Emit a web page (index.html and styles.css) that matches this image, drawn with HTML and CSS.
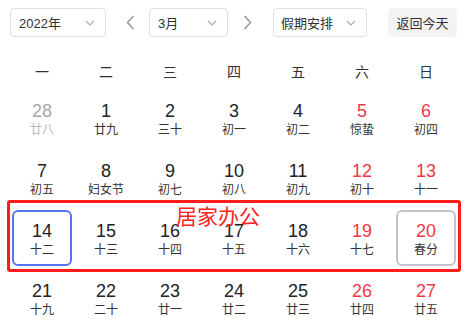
FILE: index.html
```html
<!DOCTYPE html>
<html lang="zh-CN">
<head>
  <meta charset="UTF-8">
  <meta name="viewport" content="width=device-width, initial-scale=1.0">
  <title>日历</title>
  <link rel="stylesheet" href="styles.css">
</head>
<body>
  <div class="calendar">
    <div class="toolbar">
      <div class="select year">
        <span>2022年</span>
        <svg class="caret" width="10" height="6" viewBox="0 0 10 6"><path d="M1 1 L5 5 L9 1" /></svg>
      </div>
      <button class="nav prev">
        <svg width="9" height="15" viewBox="0 0 9 15"><path d="M7.5 1 L1.5 7.5 L7.5 14" /></svg>
      </button>
      <div class="select month">
        <span>3月</span>
        <svg class="caret" width="10" height="6" viewBox="0 0 10 6"><path d="M1 1 L5 5 L9 1" /></svg>
      </div>
      <button class="nav next">
        <svg width="9" height="15" viewBox="0 0 9 15"><path d="M1.5 1 L7.5 7.5 L1.5 14" /></svg>
      </button>
      <div class="select holiday">
        <span>假期安排</span>
        <svg class="caret" width="10" height="6" viewBox="0 0 10 6"><path d="M1 1 L5 5 L9 1" /></svg>
      </div>
      <button class="today-btn">返回今天</button>
    </div>

    <div class="weekdays">
      <span>一</span><span>二</span><span>三</span><span>四</span><span>五</span><span>六</span><span>日</span>
    </div>

    <div class="days">
      <div class="day other"><b>28</b><small>廿八</small></div>
      <div class="day"><b>1</b><small>廿九</small></div>
      <div class="day"><b>2</b><small>三十</small></div>
      <div class="day"><b>3</b><small>初一</small></div>
      <div class="day"><b>4</b><small>初二</small></div>
      <div class="day weekend"><b>5</b><small>惊蛰</small></div>
      <div class="day weekend"><b>6</b><small>初四</small></div>

      <div class="day"><b>7</b><small>初五</small></div>
      <div class="day"><b>8</b><small>妇女节</small></div>
      <div class="day"><b>9</b><small>初七</small></div>
      <div class="day"><b>10</b><small>初八</small></div>
      <div class="day"><b>11</b><small>初九</small></div>
      <div class="day weekend"><b>12</b><small>初十</small></div>
      <div class="day weekend"><b>13</b><small>十一</small></div>

      <div class="day selected"><b>14</b><small>十二</small></div>
      <div class="day"><b>15</b><small>十三</small></div>
      <div class="day"><b>16</b><small>十四</small></div>
      <div class="day"><b>17</b><small>十五</small></div>
      <div class="day"><b>18</b><small>十六</small></div>
      <div class="day weekend"><b>19</b><small>十七</small></div>
      <div class="day weekend today"><b>20</b><small>春分</small></div>

      <div class="day"><b>21</b><small>十九</small></div>
      <div class="day"><b>22</b><small>二十</small></div>
      <div class="day"><b>23</b><small>廿一</small></div>
      <div class="day"><b>24</b><small>廿二</small></div>
      <div class="day"><b>25</b><small>廿三</small></div>
      <div class="day weekend"><b>26</b><small>廿四</small></div>
      <div class="day weekend"><b>27</b><small>廿五</small></div>

      <!-- week marked as work-from-home -->
      <div class="mark-week"></div>
      <div class="mark-label">居家办公</div>
    </div>
  </div>
</body>
</html>
```

FILE: styles.css
```css
body {
  margin: 0;
  background: #fff;
  font-family: "Liberation Sans", Arial, "Noto Sans CJK SC", sans-serif;
  color: #222;
}

.calendar {
  width: 471px;
  padding-top: 8px;
}

.toolbar {
  display: flex;
  align-items: center;
  height: 29px;
  padding-left: 10px;
}

.select {
  box-sizing: border-box;
  height: 29px;
  display: flex;
  align-items: center;
  justify-content: space-between;
  padding: 0 10px 0 8px;
  border: 1px solid #dcdfe6;
  border-radius: 4px;
  font-size: 13px;
  color: #303133;
}

.year { width: 96px; }
.month { width: 79px; }
.holiday { width: 94px; padding-left: 7px; }

.caret path,
.nav path {
  fill: none;
  stroke: #a8abb2;
  stroke-width: 1.2;
}

.nav path {
  stroke: #909399;
  stroke-width: 1.4;
}

.nav {
  width: 20px;
  height: 29px;
  padding: 0;
  border: none;
  background: none;
  display: flex;
  align-items: center;
  justify-content: center;
}

.prev { margin: 0 9px 0 14px; }
.next { margin: 0 16px 0 9px; }

.today-btn {
  box-sizing: border-box;
  height: 29px;
  width: 69px;
  margin-left: 21px;
  border: none;
  border-radius: 5px;
  background: #f3f3f4;
  font-family: inherit;
  font-size: 13px;
  color: #303133;
}

.weekdays {
  display: grid;
  grid-template-columns: repeat(7, 60px);
  column-gap: 4px;
  padding-left: 12px;
  margin-top: 15px;
  height: 38px;
  align-items: center;
  font-size: 14px;
  color: #303133;
  text-align: center;
}

.days {
  position: relative;
  display: grid;
  grid-template-columns: repeat(7, 60px);
  grid-auto-rows: 56px;
  gap: 4px;
  padding-left: 12px;
}

.day {
  box-sizing: border-box;
  border: 2px solid transparent;
  border-radius: 6px;
  padding-top: 8px;
  text-align: center;
}

.day b {
  display: block;
  font-weight: normal;
  font-size: 18px;
  line-height: 22px;
}

.day small {
  display: block;
  font-size: 12px;
  line-height: 16px;
  color: #333;
}

.day.other b { color: #a8a8a8; }
.day.other small { color: #b8b8b8; }

.day.weekend b { color: #f5364a; }

.day.selected { border-color: #5674f0; }
.day.today { border-color: #c0c4cc; }

.mark-week {
  position: absolute;
  left: 7px;
  top: 110px;
  width: 454px;
  height: 72px;
  box-sizing: border-box;
  border: 3px solid #ff1c1c;
  border-radius: 3px;
}

.mark-label {
  position: absolute;
  left: 176px;
  top: 114px;
  font-family: "Noto Sans CJK SC", sans-serif;
  font-size: 21px;
  line-height: 22px;
  color: #ff2424;
}
```
